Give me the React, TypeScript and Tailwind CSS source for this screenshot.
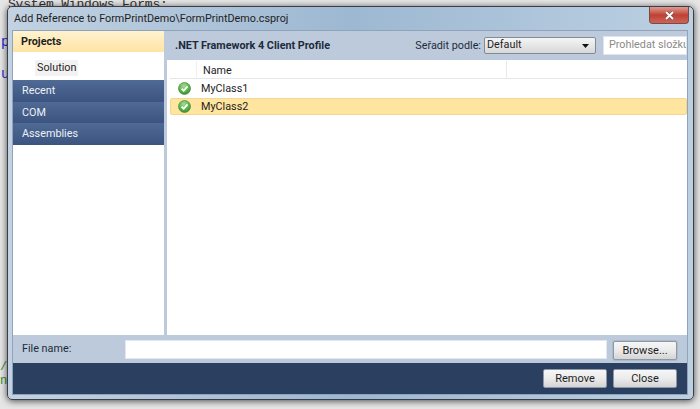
import React from 'react';

const ui = "font-['Roboto','Noto_Sans',sans-serif]";

function CheckIcon() {
  return (
    <svg width="13" height="13" viewBox="0 0 13 13" className="shrink-0">
      <defs>
        <radialGradient id="ok" cx="45%" cy="30%" r="75%">
          <stop offset="0%" stopColor="#a5dc8e" />
          <stop offset="60%" stopColor="#5cb04a" />
          <stop offset="100%" stopColor="#2f8a35" />
        </radialGradient>
      </defs>
      <circle cx="6.5" cy="6.5" r="6" fill="url(#ok)" stroke="#3f8f3f" strokeWidth="0.7" />
      <path d="M3.6 6.7 L5.7 8.8 L9.5 4.4" fill="none" stroke="#fff" strokeWidth="1.7" />
    </svg>
  );
}

function WinButton({ label, focused }: { label: string; focused?: boolean }) {
  return (
    <button
      className={`h-[19px] w-[64px] rounded-[2px] border bg-gradient-to-b from-[#f6f6f6] via-[#ebebeb] to-[#d4d4d4] text-[11px] leading-none text-[#1c1c1c] ${
        focused ? 'border-[#8c99a8] shadow-[0_0_0_1px_#aeb9c6]' : 'border-[#8d97a5]'
      }`}
    >
      {label}
    </button>
  );
}

export default function App() {
  return (
    <div className={`relative h-[409px] w-[700px] overflow-hidden bg-[#e6e6e6] ${ui}`}>
      {/* code editor behind the dialog */}
      <div className="absolute left-[8px] top-[-5px] font-['Liberation_Mono',monospace] text-[13px] tracking-[-0.2px] text-[#333]">
        System.Windows.Forms;
      </div>
      <div className="absolute left-[1px] top-[32px] font-['Liberation_Mono',monospace] text-[14px] text-[#2a2ad0]">p</div>
      <div className="absolute left-[1px] top-[64px] font-['Liberation_Mono',monospace] text-[14px] text-[#2a2ad0]">u</div>
      <div className="absolute left-0 top-[360px] font-['Liberation_Mono',monospace] text-[12px] leading-[14px] text-[#2f8f2f]">
        <div>/</div>
        <div>n</div>
      </div>

      {/* dialog window */}
      <div className="absolute left-[7px] top-[6px] flex h-[394px] w-[687px] flex-col rounded-[5px] border border-[#3a3f47] bg-gradient-to-r from-[#c2d2e2] via-[#9db8d2] to-[#bcd0e2] pb-[4px] pl-[4px] pr-[5px] shadow-[0_1px_7px_rgba(0,0,0,0.7)]">
        <div className="relative flex h-[23px] shrink-0 items-center">
          <span className="pl-[2px] pt-[2px] text-[10.8px] text-[#1e1e1e]">Add Reference to FormPrintDemo\FormPrintDemo.csproj</span>
          <div className="absolute right-[-1px] top-0 flex h-[17px] w-[40px] items-center justify-center rounded-b-[4px] border border-t-0 border-[#7a4a4a] bg-gradient-to-b from-[#dc9a90] via-[#bf4034] to-[#cc6458]">
            <svg width="11" height="9" viewBox="0 0 11 9">
              <path d="M2 1 L9 8 M9 1 L2 8" stroke="#6b5050" strokeWidth="3" />
              <path d="M2 1 L9 8 M9 1 L2 8" stroke="#fff" strokeWidth="1.8" />
            </svg>
          </div>
        </div>

        <div className="flex min-h-0 flex-1 flex-col border border-[#8fa3bb] bg-[#bccadb]">
          <div className="flex min-h-0 flex-1">
            {/* left nav */}
            <div className="flex w-[151px] shrink-0 flex-col bg-white">
              <div className="flex h-[21px] items-center bg-gradient-to-b from-[#fff3cf] to-[#ffe3a3] pl-[8px] pt-[2px] text-[10.8px] font-bold text-[#1e1e1e]">
                Projects
              </div>
              <div className="flex h-[28px] items-center pl-[22px] pt-[3px]">
                <span className="bg-[#f2f2f2] px-[2px] py-[2px] text-[10.8px] leading-[12px] text-[#1e1e1e]">Solution</span>
              </div>
              {['Recent', 'COM', 'Assemblies'].map((item) => (
                <div
                  key={item}
                  className="flex h-[21.5px] items-center bg-gradient-to-b from-[#4f6a95] to-[#3c5480] pl-[9px] pt-[1px] text-[10.8px] text-[#eef2f8]"
                >
                  {item}
                </div>
              ))}
            </div>

            <div className="w-[3px] shrink-0 bg-[#bccadb]" />

            {/* right pane */}
            <div className="flex min-w-0 flex-1 flex-col">
              <div className="flex h-[29px] shrink-0 items-center pl-[8px]">
                <span className="pt-[1px] text-[10.8px] font-bold text-[#1e2a3a]">.NET Framework 4 Client Profile</span>
                <span className="ml-auto pt-[1px] text-[10.8px] text-[#1e2a3a]">Seřadit podle:</span>
                <div className="ml-[3px] flex h-[17px] w-[112px] items-center justify-between rounded-[2px] border border-[#7f8b99] bg-gradient-to-b from-[#f5f5f5] to-[#d8d8d8] pl-[2px] pr-[6px] text-[10.8px] text-[#1e1e1e]">
                  Default
                  <svg width="7" height="4" viewBox="0 0 7 4">
                    <path d="M0 0 H7 L3.5 4 Z" fill="#111" />
                  </svg>
                </div>
                <div className="ml-[7px] flex h-[19px] w-[84px] items-center overflow-hidden whitespace-nowrap border border-[#dfe5ec] bg-white pl-[5px] text-[10.8px] text-[#8a8a8a]">
                  Prohledat složku Projects
                </div>
              </div>

              <div className="flex min-h-0 flex-1 flex-col bg-white pl-[3px] pt-[1px]">
                <div className="flex h-[18px] shrink-0 items-center border-b border-[#e4e7ea] text-[10.8px] text-[#1e1e1e]">
                  <div className="h-full w-[27px] border-r border-[#f0f0f0]" />
                  <div className="flex h-full w-[310px] items-center border-r border-[#e8e8e8] pl-[6px] pt-[3px]">Name</div>
                </div>
                <div className="flex h-[19px] shrink-0 items-center pl-[8px] text-[10.8px] text-[#1e1e1e]">
                  <CheckIcon />
                  <span className="ml-[10px] pt-[2px]">MyClass1</span>
                </div>
                <div className="flex h-[17px] shrink-0 items-center rounded-[2px] border border-[#f1d78f] bg-[#ffe5a0] pl-[7px] text-[10.8px] text-[#1e1e1e]">
                  <CheckIcon />
                  <span className="ml-[10px] pt-[1px]">MyClass2</span>
                </div>
              </div>
            </div>
          </div>

          {/* file name row */}
          <div className="flex h-[28px] shrink-0 items-center bg-[#bccadb] pl-[9px] pr-[10px]">
            <span className="w-[103px] text-[10.8px] text-[#1e2a3a]">File name:</span>
            <div className="h-[19px] flex-1 border border-[#e2e8ef] bg-white" />
            <div className="ml-[6px]">
              <WinButton label="Browse..." focused />
            </div>
          </div>

          {/* footer */}
          <div className="flex h-[31px] shrink-0 items-center justify-end gap-[6px] bg-[#2b3f61] pr-[10px]">
            <WinButton label="Remove" />
            <WinButton label="Close" />
          </div>
        </div>
      </div>
    </div>
  );
}
